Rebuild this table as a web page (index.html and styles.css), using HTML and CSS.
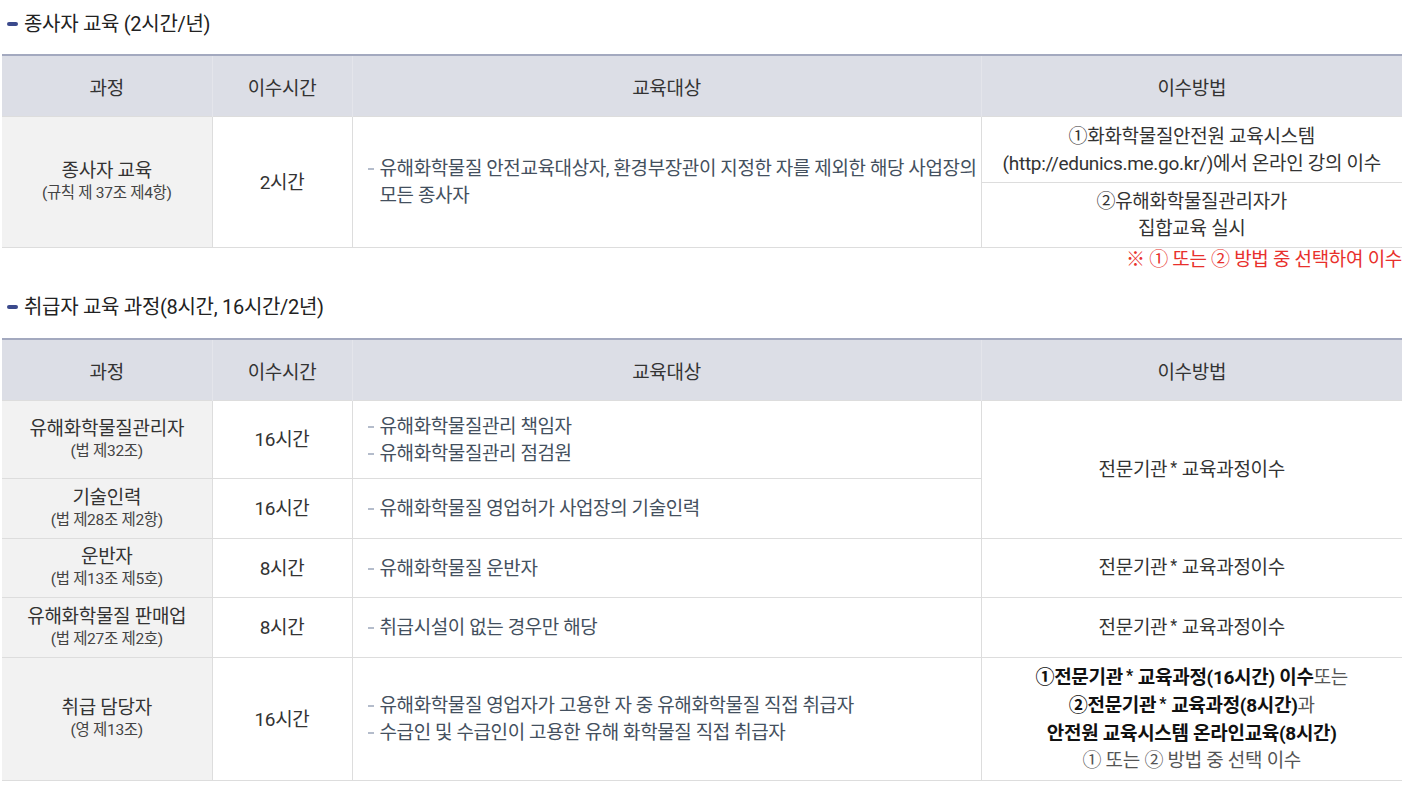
FILE: index.html
```html
<!DOCTYPE html>
<html lang="ko">
<head>
  <meta charset="UTF-8">
  <meta name="viewport" content="width=device-width, initial-scale=1.0">
  <title>유해화학물질 교육</title>
  <link rel="stylesheet" href="styles.css">
</head>
<body>
  <div class="container">
    <!-- 종사자 교육 -->
    <h3 class="sec-title">종사자 교육 (2시간/년)</h3>
    <table class="edu-table first">
      <colgroup>
        <col class="c1"><col class="c2"><col class="c3"><col class="c4">
      </colgroup>
      <thead>
        <tr>
          <th>과정</th>
          <th>이수시간</th>
          <th>교육대상</th>
          <th>이수방법</th>
        </tr>
      </thead>
      <tbody>
        <tr class="h67">
          <td rowspan="2" class="course">종사자 교육<span class="law">(규칙 제 37조 제4항)</span></td>
          <td rowspan="2">2시간</td>
          <td rowspan="2" class="target">
            <ul>
              <li>유해화학물질 안전교육대상자, 환경부장관이 지정한 자를 제외한 해당 사업장의 모든 종사자</li>
            </ul>
          </td>
          <td>①화화학물질안전원 교육시스템<br>(http://edunics.me.go.kr/)에서 온라인 강의 이수</td>
        </tr>
        <tr class="h65">
          <td>②유해화학물질관리자가<br>집합교육 실시</td>
        </tr>
      </tbody>
    </table>
    <p class="note">※ ① 또는 ② 방법 중 선택하여 이수</p>

    <!-- 취급자 교육 과정 -->
    <h3 class="sec-title second">취급자 교육 과정(8시간, 16시간/2년)</h3>
    <table class="edu-table">
      <colgroup>
        <col class="c1"><col class="c2"><col class="c3"><col class="c4">
      </colgroup>
      <thead>
        <tr>
          <th>과정</th>
          <th>이수시간</th>
          <th>교육대상</th>
          <th>이수방법</th>
        </tr>
      </thead>
      <tbody>
        <tr class="h78">
          <td class="course">유해화학물질관리자<span class="law">(법 제32조)</span></td>
          <td>16시간</td>
          <td class="target">
            <ul>
              <li>유해화학물질관리 책임자</li>
              <li>유해화학물질관리 점검원</li>
            </ul>
          </td>
          <td rowspan="2">전문기관<span class="star">*</span>교육과정이수</td>
        </tr>
        <tr class="h60">
          <td class="course">기술인력<span class="law">(법 제28조 제2항)</span></td>
          <td>16시간</td>
          <td class="target">
            <ul>
              <li>유해화학물질 영업허가 사업장의 기술인력</li>
            </ul>
          </td>
        </tr>
        <tr class="h59">
          <td class="course">운반자<span class="law">(법 제13조 제5호)</span></td>
          <td>8시간</td>
          <td class="target">
            <ul>
              <li>유해화학물질 운반자</li>
            </ul>
          </td>
          <td>전문기관<span class="star">*</span>교육과정이수</td>
        </tr>
        <tr class="h60">
          <td class="course">유해화학물질 판매업<span class="law">(법 제27조 제2호)</span></td>
          <td>8시간</td>
          <td class="target">
            <ul>
              <li>취급시설이 없는 경우만 해당</li>
            </ul>
          </td>
          <td>전문기관<span class="star">*</span>교육과정이수</td>
        </tr>
        <tr class="h123">
          <td class="course">취급 담당자<span class="law">(영 제13조)</span></td>
          <td>16시간</td>
          <td class="target">
            <ul>
              <li>유해화학물질 영업자가 고용한 자 중 유해화학물질 직접 취급자</li>
              <li>수급인 및 수급인이 고용한 유해 화학물질 직접 취급자</li>
            </ul>
          </td>
          <td class="method">
            <b>①전문기관<span class="star">*</span>교육과정(16시간) 이수</b>또는<br>
            <b>②전문기관<span class="star">*</span>교육과정(8시간)</b>과<br>
            <b>안전원 교육시스템 온라인교육(8시간)</b><br>
            ① 또는 ② 방법 중 선택 이수
          </td>
        </tr>
      </tbody>
    </table>
  </div>
</body>
</html>
```

FILE: styles.css
```css
body {
  margin: 0;
  padding: 0;
  background-color: #fff;
  font-family: Roboto, "Noto Sans CJK KR", sans-serif;
  color: #333;
}
.container {
  width: 1400px;
  padding-left: 2px;
}
.sec-title {
  position: relative;
  margin: 0;
  padding: 9px 0 0 22px;
  height: 54px;
  box-sizing: border-box;
  font-size: 20px;
  font-weight: normal;
  line-height: 30px;
  color: #222;
  letter-spacing: -0.3px;
}
.sec-title::before {
  content: "";
  position: absolute;
  left: 5px;
  top: 22px;
  width: 11px;
  height: 4px;
  border-radius: 2px;
  background-color: #3b4a8c;
}
.sec-title.second {
  height: 66px;
  padding-top: 20px;
}
.sec-title.second::before {
  top: 33px;
}
.edu-table {
  width: 1400px;
  table-layout: fixed;
  border-collapse: collapse;
  font-size: 19px;
  letter-spacing: -0.3px;
}
.c1 { width: 210px; }
.c2 { width: 140px; }
.c3 { width: 629px; }
.c4 { width: 421px; }
.edu-table th {
  height: 60px;
  padding: 0;
  background-color: #dcdee6;
  border-top: 2px solid #a3a9bf;
  border-left: 1px solid #e4e5eb;
  font-weight: normal;
  color: #333;
}
.edu-table th:first-child {
  border-left: none;
}
.edu-table td {
  padding: 0 4px;
  text-align: center;
  vertical-align: middle;
  line-height: 27px;
  border: 1px solid #dddddd;
  color: #333;
}
.edu-table td:first-child {
  border-left: none;
}
.edu-table td:last-child {
  border-right: none;
}
.edu-table td.course {
  background-color: #f2f2f2;
  line-height: 23px;
}
.law {
  display: block;
  font-size: 15.5px;
  color: #444;
}
.target {
  text-align: left !important;
  padding: 0 0 0 14px !important;
  letter-spacing: -0.4px;
}
.target ul {
  margin: 0;
  padding: 0;
  list-style: none;
}
.target li {
  position: relative;
  padding-left: 13px;
  color: #44505e;
}
.target li::before {
  content: "";
  position: absolute;
  left: 1px;
  top: 13px;
  width: 6px;
  height: 2px;
  background-color: #b4bccb;
}
.star {
  position: relative;
  top: -3px;
  margin: 0 5px 0 3px;
  font-size: 16px;
}
.method {
  color: #555 !important;
}
.method b {
  color: #111;
}
.h67 td { height: 65px; }
.h65 td { height: 64px; }
.h78 td { height: 77px; }
.h60 td { height: 59px; }
.h59 td { height: 58px; }
.h123 td { height: 122px; }
.note {
  margin: 0;
  height: 24px;
  text-align: right;
  color: #e8302c;
  font-size: 19px;
  line-height: 24px;
  letter-spacing: -0.3px;
}
```
